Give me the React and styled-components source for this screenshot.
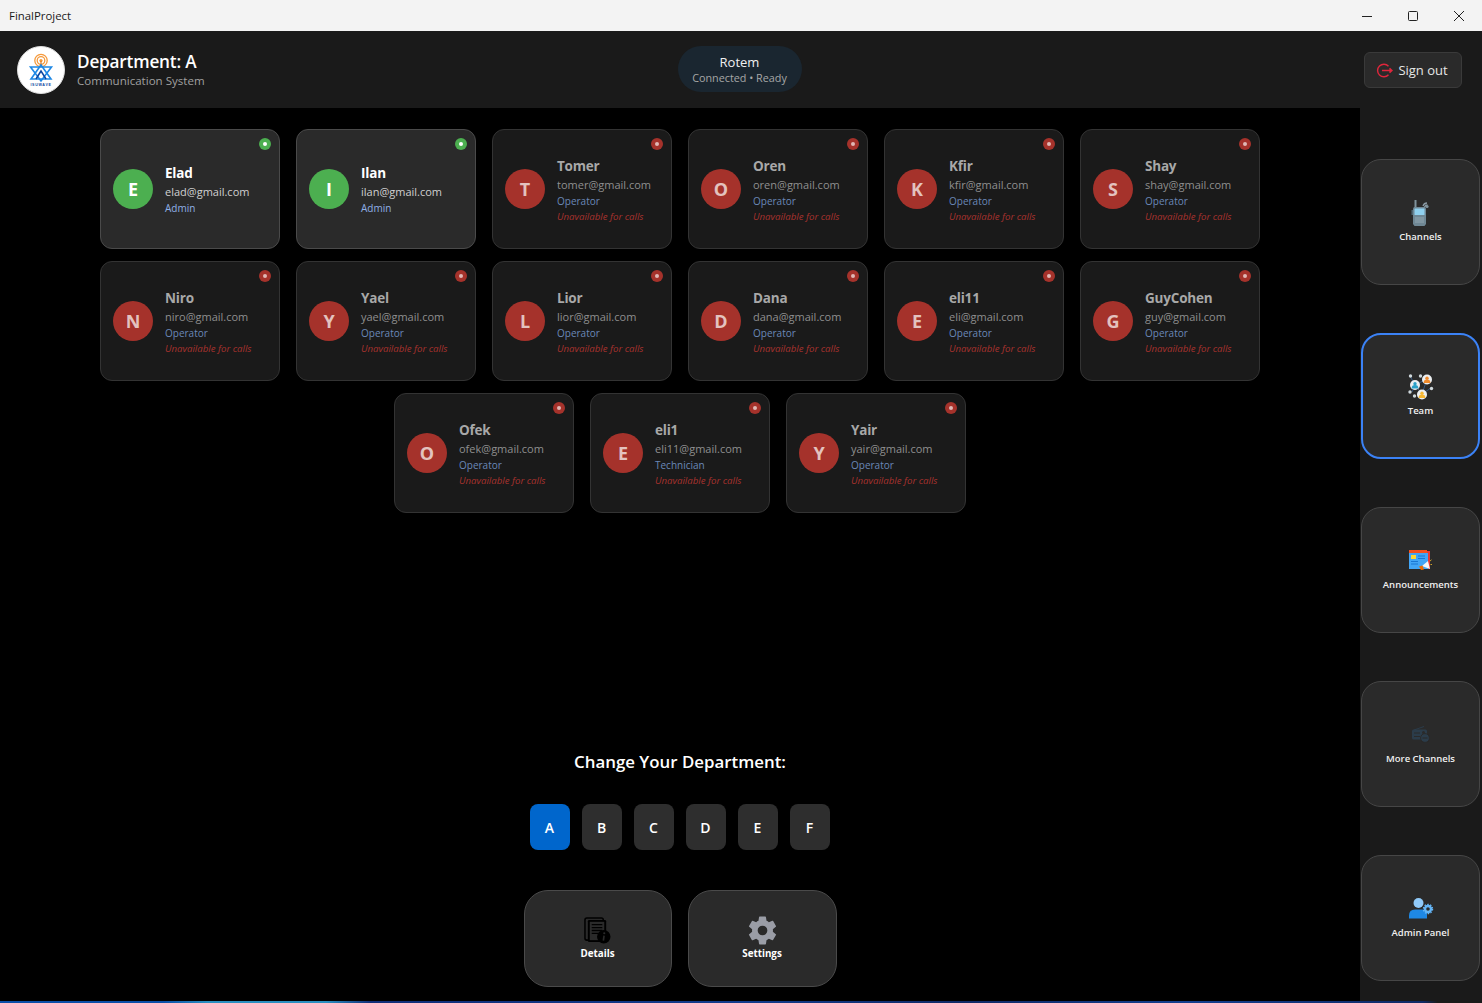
import React from "react";
import styled, { createGlobalStyle } from "styled-components";
import { IoSettingsSharp } from "react-icons/io5";

const GlobalStyle = createGlobalStyle`
  html, body {
    margin: 0;
    padding: 0;
    height: 100%;
    background: #000;
    font-family: "Open Sans", "Noto Sans", "Liberation Sans", sans-serif;
  }
  * { box-sizing: border-box; }
`;

const Page = styled.div`
  width: 1482px;
  height: 1003px;
  display: flex;
  flex-direction: column;
  overflow: hidden;
  background: #000;
`;

const TitleBar = styled.div`
  height: 31px;
  flex: none;
  display: flex;
  align-items: center;
  justify-content: space-between;
  padding-left: 9px;
  background: #f3f3f3;
  color: #1a1a1a;
  font-size: 11.4px;
`;

const WindowControls = styled.div`
  display: flex;
  height: 100%;
`;

const WindowButton = styled.div`
  width: 46px;
  height: 100%;
  display: flex;
  align-items: center;
  justify-content: center;
  color: #222;
`;

const Header = styled.header`
  height: 77px;
  flex: none;
  display: grid;
  grid-template-columns: 1fr auto 1fr;
  align-items: center;
  padding: 0 20px 0 17px;
  background: #1a1a1a;
`;

const Brand = styled.div`
  display: flex;
  align-items: center;
  gap: 12px;
`;

const LogoCircle = styled.div`
  width: 48px;
  height: 48px;
  border-radius: 50%;
  background: #fff;
  border: 1px solid #ddd;
  display: flex;
  align-items: center;
  justify-content: center;
`;

const BrandText = styled.div`
  display: flex;
  flex-direction: column;
`;

const DeptTitle = styled.div`
  color: #fff;
  font-size: 17.2px;
  font-weight: 600;
  line-height: 22px;
  letter-spacing: -0.2px;
`;

const DeptSub = styled.div`
  color: #a0a0a0;
  font-size: 11.55px;
  line-height: 15px;
`;

const UserPill = styled.div`
  width: 124px;
  height: 46px;
  border-radius: 23px;
  background: #1a2630;
  display: flex;
  flex-direction: column;
  align-items: center;
  justify-content: center;
  margin-top: -1px;
`;

const PillName = styled.div`
  color: #f0f0f0;
  font-size: 13px;
  line-height: 17px;
`;

const PillStatus = styled.div`
  color: #a6a6a6;
  font-size: 10.8px;
  line-height: 14px;
`;

const SignOut = styled.button`
  justify-self: end;
  width: 98px;
  height: 36px;
  margin-top: 1px;
  border-radius: 6px;
  border: 1px solid #3a3a3a;
  background: #2a2a2a;
  color: #e6e6e6;
  font-family: inherit;
  font-size: 13px;
  display: flex;
  align-items: center;
  justify-content: center;
  gap: 5px;
  padding: 0 2px 0 0;
`;

const Body = styled.div`
  flex: 1;
  display: flex;
  min-height: 0;
`;

const Main = styled.main`
  flex: 1;
  display: flex;
  flex-direction: column;
  align-items: center;
  padding-top: 21px;
`;

const CardGrid = styled.div`
  width: 1176px;
  display: flex;
  flex-wrap: wrap;
  justify-content: center;
  gap: 12px 16px;
`;

const Card = styled.div`
  position: relative;
  width: 180px;
  height: 120px;
  padding: 0 12px;
  display: flex;
  align-items: center;
  gap: 12px;
  border-radius: 12px;
  border: 1px solid ${(p) => (p.$online ? "#4a4a4a" : "#333")};
  background: ${(p) => (p.$online ? "#2a2a2a" : "#1a1a1a")};
`;

const StatusDot = styled.span`
  position: absolute;
  top: 8px;
  right: 8px;
  width: 12px;
  height: 12px;
  border-radius: 50%;
  background: ${(p) => (p.$online ? "#4caf50" : "#a5322b")};
  display: flex;
  align-items: center;
  justify-content: center;
  &::after {
    content: "";
    width: 4px;
    height: 4px;
    border-radius: 50%;
    background: ${(p) => (p.$online ? "#fff" : "#e0b8b5")};
  }
`;

const Avatar = styled.div`
  width: 40px;
  height: 40px;
  flex: none;
  border-radius: 50%;
  background: ${(p) => (p.$online ? "#4caf50" : "#a5322b")};
  color: ${(p) => (p.$online ? "#fff" : "#e3c2bf")};
  font-size: 18px;
  font-weight: 700;
  display: flex;
  align-items: center;
  justify-content: center;
`;

const CardInfo = styled.div`
  min-width: 0;
  padding-top: 1px;
  display: flex;
  flex-direction: column;
`;

const CardName = styled.div`
  color: ${(p) => (p.$online ? "#fff" : "#a8a8a8")};
  font-size: 13.5px;
  font-weight: 700;
  line-height: 20px;
  letter-spacing: -0.2px;
`;

const CardEmail = styled.div`
  color: ${(p) => (p.$online ? "#d0d0d0" : "#8f8f8f")};
  font-size: 11px;
  line-height: 18px;
`;

const CardRole = styled.div`
  color: ${(p) => (p.$online ? "#8fb0e6" : "#6a88b8")};
  font-size: 10px;
  line-height: 15px;
`;

const Unavailable = styled.div`
  color: #a8322e;
  font-size: 9.65px;
  font-style: italic;
  line-height: 15px;
  white-space: nowrap;
`;

const DeptHeading = styled.h2`
  margin: auto 0 0;
  color: #fff;
  font-size: 16.85px;
  font-weight: 600;
  line-height: 24px;
`;

const DeptRow = styled.div`
  display: flex;
  gap: 12px;
  margin-top: 30px;
`;

const DeptButton = styled.button`
  width: 40px;
  height: 46px;
  border: none;
  border-radius: 8px;
  padding: 0 1px 0 0;
  background: ${(p) => (p.$active ? "#0066cc" : "#2e2e2e")};
  color: #fff;
  font-family: inherit;
  font-size: 14px;
  font-weight: 600;
`;

const ActionRow = styled.div`
  display: flex;
  gap: 16px;
  margin-top: 40px;
  margin-bottom: 14px;
`;

const ActionCard = styled.button`
  width: ${(p) => p.$width}px;
  height: 97px;
  border-radius: 24px;
  border: 1px solid #4a4a4a;
  background: #2a2a2a;
  color: #fff;
  font-family: inherit;
  font-size: 9.8px;
  font-weight: 700;
  line-height: 13px;
  display: flex;
  flex-direction: column;
  align-items: center;
  justify-content: center;
  gap: 3px;
  padding: 0 0 1px;
`;

const IconSlot = styled.span`
  height: 28px;
  display: flex;
  align-items: center;
  justify-content: center;
`;

const Sidebar = styled.aside`
  width: 122px;
  flex: none;
  display: flex;
  flex-direction: column;
  gap: 48px;
  padding: 51px 2px 0 1px;
  background: #1a1a1a;
`;

const NavButton = styled.button`
  width: 119px;
  height: 126px;
  flex: none;
  border-radius: 20px;
  border: ${(p) => (p.$active ? "2px solid #3b82f6" : "1px solid #464646")};
  background: #2a2a2a;
  color: #f0f0f0;
  font-family: inherit;
  font-size: 9.5px;
  font-weight: 600;
  line-height: 13px;
  display: flex;
  flex-direction: column;
  align-items: center;
  justify-content: center;
  gap: 3px;
  padding: 0 0 3px;
`;

const TaskbarEdge = styled.div`
  height: 2px;
  flex: none;
  background: linear-gradient(
    90deg,
    #0b4fa8 0%,
    #0b4fa8 11%,
    #2a8fc0 14%,
    #2a8fc0 22%,
    #102e78 25%,
    #123c8c 50%,
    #0f2a66 65%,
    #133f8e 80%,
    #0f2a66 96%,
    #1a1a1a 97%
  );
`;

const LogoIcon = () => (
  <svg width="36" height="36" viewBox="0 0 36 36" fill="none">
    <g stroke="#f59a3c" fill="none" strokeWidth="1.3">
      <circle cx="18" cy="8.5" r="6.2" />
      <circle cx="18" cy="8.5" r="3.8" />
    </g>
    <circle cx="18" cy="8.5" r="1.6" fill="#f59a3c" />
    <path d="M18 9v6" stroke="#e07a20" strokeWidth="1.2" />
    <g stroke="#1e88e5" strokeWidth="1.6" fill="none">
      <path d="M7.5 15h21L18 29z" />
      <path d="M18 13l10 14H8z" />
    </g>
    <path d="M13 27l5-8 5 8" stroke="#0d47a1" strokeWidth="1.5" />
    <text x="18" y="33.5" textAnchor="middle" fontSize="3.6" fontWeight="700" letterSpacing="0.7" fill="#0d47a1" fontFamily="Liberation Sans, sans-serif">
      ISUWAVE
    </text>
  </svg>
);

const SignOutIcon = () => (
  <svg width="17" height="17" viewBox="0 0 17 17" fill="none" stroke="#e0263c" strokeWidth="1.4">
    <path d="M12.5 4.2A6.3 6.3 0 1 0 12.5 12.8" />
    <path d="M6 8.5h10M13.5 6.3l2.4 2.2-2.4 2.2" strokeWidth="1.6" />
  </svg>
);

const RadioIcon = () => (
  <svg width="20" height="26" viewBox="0 0 20 26">
    <rect x="3.5" y="0" width="2" height="7" fill="#7f929c" />
    <path d="M12 6q1-3 4-3M13.5 7q1-2 3-2" stroke="#8a9aa4" strokeWidth="1.3" fill="none" />
    <circle cx="16" cy="6.5" r="1.6" fill="#7f929c" />
    <path d="M3 7h11l1 1.5V24l-1.5 2h-10L2 24V8.5z" fill="#6f8794" />
    <rect x="3.5" y="8.5" width="10" height="6.5" rx="0.5" fill="#8fd0ee" />
    <path d="M4 18h9M4 20h9M4 22h9" stroke="#93a6b0" strokeWidth="1" />
    <rect x="0.5" y="10" width="1.5" height="5" fill="#4f6673" />
  </svg>
);

const TeamIcon = () => (
  <svg width="26" height="26" viewBox="0 0 26 26">
    <path d="M7 11L19 5M7 11l7 9M19 5l-5 15M23 14l-9 6M2 2l5 9M4 18l3-7" stroke="#35557f" strokeWidth="1" />
    <circle cx="2.5" cy="2" r="1.7" fill="#cfd8dc" />
    <circle cx="12.5" cy="2" r="1.7" fill="#cfd8dc" />
    <circle cx="2" cy="18" r="1.7" fill="#cfd8dc" />
    <circle cx="6.5" cy="22" r="1.7" fill="#cfd8dc" />
    <circle cx="23.5" cy="14.5" r="1.7" fill="#cfd8dc" />
    <circle cx="7" cy="11" r="5" fill="#eceff1" />
    <circle cx="7" cy="9.8" r="1.7" fill="#29a0c8" />
    <path d="M3.6 14.5a3.4 3.4 0 0 1 6.8 0z" fill="#29a0c8" />
    <circle cx="19" cy="5.5" r="5" fill="#eceff1" />
    <circle cx="19" cy="4.3" r="1.7" fill="#ef8a2c" />
    <path d="M15.6 9a3.4 3.4 0 0 1 6.8 0z" fill="#ef8a2c" />
    <circle cx="14" cy="20.5" r="5" fill="#eceff1" />
    <circle cx="14" cy="19.3" r="1.7" fill="#f6b733" />
    <path d="M10.6 24a3.4 3.4 0 0 1 6.8 0z" fill="#f6b733" />
  </svg>
);

const NewsIcon = () => (
  <svg width="23" height="22" viewBox="0 0 23 22">
    <rect x="2" y="1" width="19" height="18" fill="#e53935" />
    <rect x="0" y="3" width="19" height="16" fill="#42a5f5" />
    <rect x="0" y="0" width="18" height="3" fill="#f4511e" />
    <rect x="2" y="5" width="5" height="4" fill="#fdd835" />
    <path d="M9 6h7M9 8.5h7M2 11.5h7M2 14h7" stroke="#1976d2" strokeWidth="1" />
    <path d="M13 16l6-5 2 8z" fill="#f5f5f5" />
    <path d="M10 16.5l3.5-1 1.5 4-3 .5z" fill="#ef6c00" />
    <path d="M21 11l1.5-1.2M21.5 14.5H23" stroke="#fbc02d" strokeWidth="0.8" />
  </svg>
);

const MoreChannelsIcon = () => (
  <svg width="18" height="17" viewBox="0 0 18 17">
    <path d="M2 4L12 0.5" stroke="#2b3c4a" strokeWidth="1" />
    <rect x="0" y="3.5" width="15" height="10" rx="1.5" fill="#2b3c4a" />
    <path d="M2 7h6M2 10.5h6" stroke="#2a2a2a" strokeWidth="1" />
    <circle cx="11.5" cy="6.5" r="1.5" fill="#2a2a2a" />
    <circle cx="13" cy="12" r="4.4" fill="#2b3c4a" stroke="#2a2a2a" />
    <path d="M10.5 12h5" stroke="#2a2a2a" strokeWidth="1.1" />
  </svg>
);

const AdminIcon = () => (
  <svg width="26" height="21" viewBox="0 0 26 21">
    <circle cx="10.5" cy="5" r="5" fill="#90caf9" />
    <path d="M1 20.5v-3q0-6 6-6h7q4 0 5 3v6z" fill="#1e88e5" />
    <circle cx="20" cy="11" r="3" fill="#2a2a2a" stroke="#64b5f6" strokeWidth="2.4" />
    <circle cx="20" cy="11" r="4.6" fill="none" stroke="#64b5f6" strokeWidth="1.2" strokeDasharray="1.6 1.3" />
  </svg>
);

const DetailsIcon = () => (
  <svg width="27" height="27" viewBox="0 0 28 28">
    <rect x="1" y="1" width="19" height="23" rx="2" fill="none" stroke="#000" strokeWidth="1.6" />
    <rect x="4" y="3" width="19" height="23" rx="1.5" fill="#000" />
    <rect x="6" y="5" width="15" height="19" fill="#2a2a2a" />
    <path d="M8 8h11M8 11h11M8 14h11M8 17h7" stroke="#000" strokeWidth="1.3" />
    <circle cx="20.5" cy="20.5" r="7" fill="#000" />
    <circle cx="21" cy="16.8" r="1.1" fill="#2a2a2a" />
    <path d="M20.8 19.3l-0.7 5.2" stroke="#2a2a2a" strokeWidth="1.7" />
  </svg>
);

const team = [
  { name: "Elad", email: "elad@gmail.com", role: "Admin", online: true },
  { name: "Ilan", email: "ilan@gmail.com", role: "Admin", online: true },
  { name: "Tomer", email: "tomer@gmail.com", role: "Operator" },
  { name: "Oren", email: "oren@gmail.com", role: "Operator" },
  { name: "Kfir", email: "kfir@gmail.com", role: "Operator" },
  { name: "Shay", email: "shay@gmail.com", role: "Operator" },
  { name: "Niro", email: "niro@gmail.com", role: "Operator" },
  { name: "Yael", email: "yael@gmail.com", role: "Operator" },
  { name: "Lior", email: "lior@gmail.com", role: "Operator" },
  { name: "Dana", email: "dana@gmail.com", role: "Operator" },
  { name: "eli11", email: "eli@gmail.com", role: "Operator" },
  { name: "GuyCohen", email: "guy@gmail.com", role: "Operator" },
  { name: "Ofek", email: "ofek@gmail.com", role: "Operator" },
  { name: "eli1", email: "eli11@gmail.com", role: "Technician" },
  { name: "Yair", email: "yair@gmail.com", role: "Operator" },
];

const navItems = [
  { label: "Channels", icon: <RadioIcon /> },
  { label: "Team", icon: <TeamIcon />, active: true },
  { label: "Announcements", icon: <NewsIcon /> },
  { label: "More Channels", icon: <MoreChannelsIcon /> },
  { label: "Admin Panel", icon: <AdminIcon /> },
];

const departments = ["A", "B", "C", "D", "E", "F"];

export default function App() {
  return (
    <Page>
      <GlobalStyle />
      <TitleBar>
        FinalProject
        <WindowControls>
          <WindowButton>
            <svg width="10" height="10" viewBox="0 0 10 10" stroke="currentColor"><path d="M0 5.5h10" /></svg>
          </WindowButton>
          <WindowButton>
            <svg width="10" height="10" viewBox="0 0 10 10" fill="none" stroke="currentColor"><rect x="0.5" y="0.5" width="9" height="9" rx="1" /></svg>
          </WindowButton>
          <WindowButton>
            <svg width="10" height="10" viewBox="0 0 10 10" stroke="currentColor"><path d="M0 0l10 10M10 0L0 10" /></svg>
          </WindowButton>
        </WindowControls>
      </TitleBar>
      <Header>
        <Brand>
          <LogoCircle>
            <LogoIcon />
          </LogoCircle>
          <BrandText>
            <DeptTitle>Department: A</DeptTitle>
            <DeptSub>Communication System</DeptSub>
          </BrandText>
        </Brand>
        <UserPill>
          <PillName>Rotem</PillName>
          <PillStatus>Connected • Ready</PillStatus>
        </UserPill>
        <SignOut>
          <SignOutIcon />
          Sign out
        </SignOut>
      </Header>
      <Body>
        <Main>
          <CardGrid>
            {team.map((m) => (
              <Card key={m.name} $online={m.online}>
                <StatusDot $online={m.online} />
                <Avatar $online={m.online}>{m.name[0].toUpperCase()}</Avatar>
                <CardInfo>
                  <CardName $online={m.online}>{m.name}</CardName>
                  <CardEmail $online={m.online}>{m.email}</CardEmail>
                  <CardRole $online={m.online}>{m.role}</CardRole>
                  {!m.online && <Unavailable>Unavailable for calls</Unavailable>}
                </CardInfo>
              </Card>
            ))}
          </CardGrid>
          <DeptHeading>Change Your Department:</DeptHeading>
          <DeptRow>
            {departments.map((d) => (
              <DeptButton key={d} $active={d === "A"}>{d}</DeptButton>
            ))}
          </DeptRow>
          <ActionRow>
            <ActionCard $width={148}>
              <IconSlot><DetailsIcon /></IconSlot>
              Details
            </ActionCard>
            <ActionCard $width={149}>
              <IconSlot><IoSettingsSharp size={31} color="#9a9da6" /></IconSlot>
              Settings
            </ActionCard>
          </ActionRow>
        </Main>
        <Sidebar>
          {navItems.map((item) => (
            <NavButton key={item.label} $active={item.active}>
              <IconSlot>{item.icon}</IconSlot>
              {item.label}
            </NavButton>
          ))}
        </Sidebar>
      </Body>
      <TaskbarEdge />
    </Page>
  );
}
